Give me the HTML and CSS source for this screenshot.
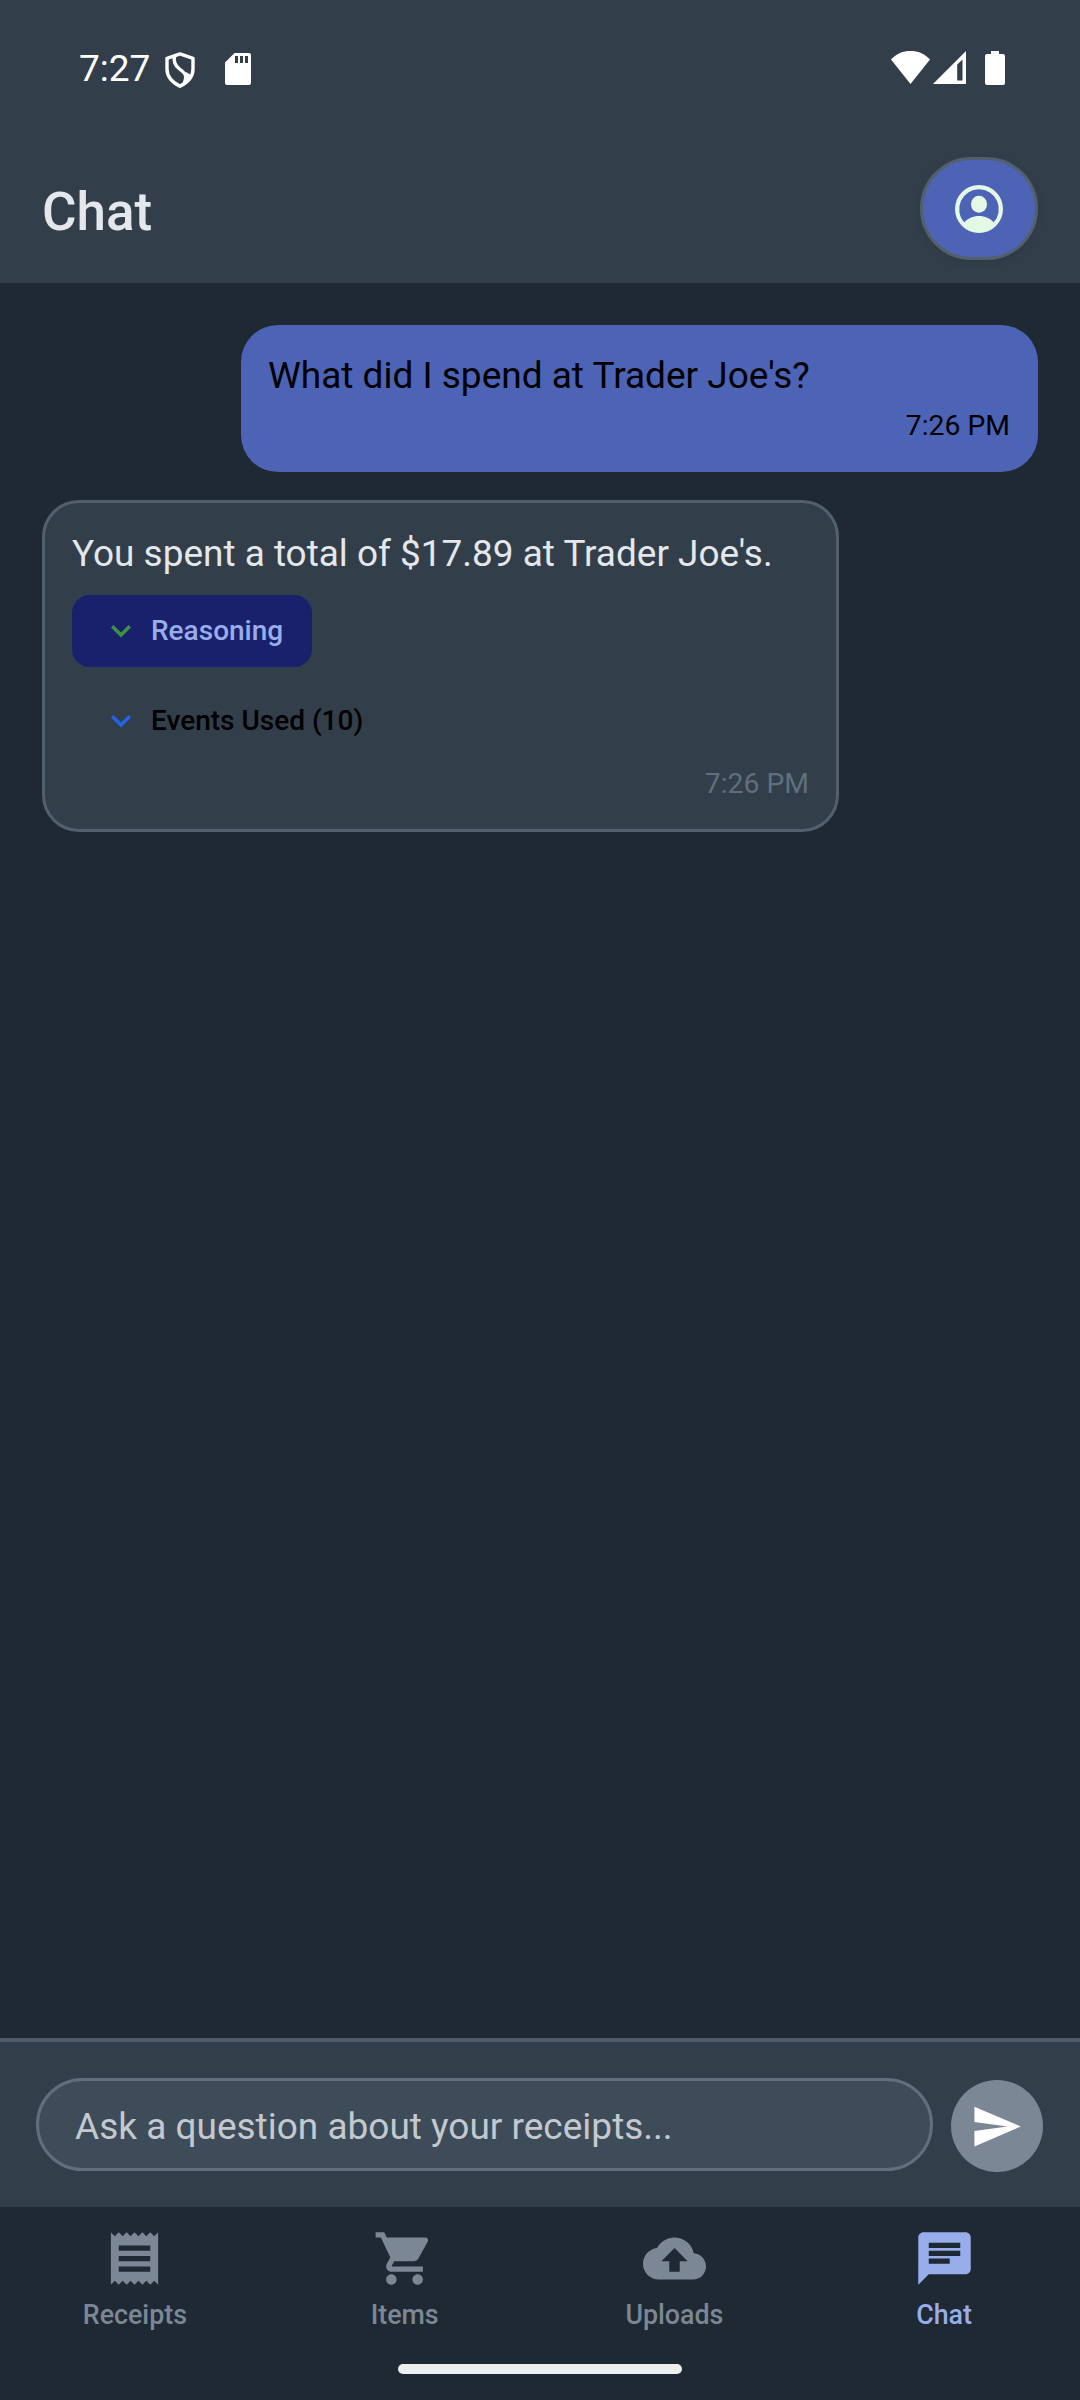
FILE: index.html
```html
<!DOCTYPE html>
<html lang="en">
<head>
<meta charset="utf-8">
<title>Chat</title>
<link rel="stylesheet" href="styles.css">
</head>
<body>
<div class="app">
  <div class="status">
    <span class="clock">7:27</span>
    <svg class="shield" viewBox="0 0 30 36" width="30" height="36"><g fill="none" stroke="#fff" stroke-width="3.4" stroke-linejoin="round"><path d="M15 1.9 28 6.3V17C28 24.500 22.500 30.500 15 34.200 7.500 30.500 2 24.500 2 17V6.300Z"/><path d="M9.800 3.500C8 9 10 13.500 14.500 17 20 21 22.500 23 19.300 31"/></g><path d="M21 20 26 23 19.500 32Z" fill="#fff"/></svg>
    <svg class="sd" viewBox="0 0 26 32" width="26" height="32"><path fill="#fff" fill-rule="evenodd" d="M9.500 0H24Q26 0 26 2V30Q26 32 24 32H2Q0 32 0 30V9.500ZM10 3V10H13V3ZM15 3V10H18V3ZM20 3V10H23V3Z"/></svg>
    <svg class="wifi" viewBox="0 0 39 33" width="39" height="33"><path fill="#fff" d="M19.500 33 0 8.500C5.500 2.500 12 0 19.500 0S33.500 2.500 39 8.500Z"/></svg>
    <svg class="signal" viewBox="0 0 33 33" width="33" height="33"><path fill="#fff" fill-rule="evenodd" d="M33 0V33H0ZM29.500 8.500 24.200 13.500V29.500H29.500Z"/></svg>
    <svg class="battery" viewBox="0 0 20 34" width="20" height="34"><path fill="#fff" d="M6 0H14V3H18Q20 3 20 5V32Q20 34 18 34H2Q0 34 0 32V5Q0 3 2 3H6Z"/></svg>
  </div>
  <header class="header">
    <h1 class="title">Chat</h1>
    <button class="profile" aria-label="Profile">
      <svg viewBox="0 0 48 48" width="48" height="48"><path fill="#e3f9e5" fill-rule="evenodd" d="M24 0A24 24 0 1 1 24 48 24 24 0 1 1 24 0ZM24 4.200A19.800 19.800 0 0 0 9.300 37.300C12.500 33.500 18 31 24 31S35.500 33.500 38.700 37.300A19.800 19.800 0 0 0 24 4.200Z"/><ellipse cx="24" cy="19.300" rx="8" ry="8.500" fill="#e3f9e5"/></svg>
    </button>
  </header>
  <main class="messages">
    <div class="bubble user">
      <p class="text">What did I spend at Trader Joe's?</p>
      <p class="time">7:26 PM</p>
    </div>
    <div class="bubble bot">
      <p class="text">You spent a total of $17.89 at Trader Joe's.</p>
      <div class="toggle reasoning">
        <svg viewBox="0 0 20 13" width="20" height="13"><path fill="none" stroke="#3f9142" stroke-width="3.500" d="M1.200 1.200 10 10 18.800 1.200"/></svg>
        <span>Reasoning</span>
      </div>
      <div class="toggle events">
        <svg viewBox="0 0 20 13" width="20" height="13"><path fill="none" stroke="#2563eb" stroke-width="3.500" d="M1.200 1.200 10 10 18.800 1.200"/></svg>
        <span>Events Used (10)</span>
      </div>
      <p class="time">7:26 PM</p>
    </div>
  </main>
  <div class="composer">
    <div class="field">Ask a question about your receipts...</div>
    <button class="send" aria-label="Send">
      <svg viewBox="0 0 24 24" width="53" height="53"><path fill="#fff" d="M2.010 21 23 12 2.010 3 2 10l15 2-15 2z"/></svg>
    </button>
  </div>
  <nav class="tabs">
    <div class="tab"><svg viewBox="0 0 24 24"><path d="M18 17H6v-2h12v2zm0-4H6v-2h12v2zm0-4H6V7h12v2zM3 22l1.500-1.500L6 22l1.500-1.500L9 22l1.500-1.500L12 22l1.500-1.500L15 22l1.500-1.500L18 22l1.500-1.500L21 22V2l-1.500 1.500L18 2l-1.500 1.500L15 2l-1.500 1.500L12 2l-1.500 1.500L9 2 7.500 3.500 6 2 4.500 3.500 3 2v20z"/></svg><span>Receipts</span></div>
    <div class="tab"><svg viewBox="0 0 24 24"><path d="M7 18c-1.100 0-1.990.9-1.990 2S5.900 22 7 22s2-.9 2-2-.9-2-2-2zM1 2v2h2l3.600 7.590-1.350 2.450c-.16.280-.25.610-.25.960 0 1.100.9 2 2 2h12v-2H7.420c-.14 0-.25-.11-.25-.25l.03-.12.9-1.630h7.450c.75 0 1.410-.41 1.750-1.030l3.580-6.490c.08-.14.12-.31.12-.48 0-.55-.45-1-1-1H5.210l-.94-2H1zm16 16c-1.100 0-1.990.9-1.990 2s.89 2 1.990 2 2-.9 2-2-.9-2-2-2z"/></svg><span>Items</span></div>
    <div class="tab"><svg viewBox="0 0 24 24"><path d="M19.350 10.040C18.670 6.590 15.640 4 12 4 9.110 4 6.600 5.640 5.350 8.040 2.340 8.360 0 10.910 0 14c0 3.310 2.690 6 6 6h13c2.760 0 5-2.240 5-5 0-2.640-2.050-4.780-4.650-4.960zM14 13v4h-4v-4H7l5-5 5 5h-3z"/></svg><span>Uploads</span></div>
    <div class="tab active"><svg viewBox="0 0 24 24"><path d="M20 2H4c-1.100 0-1.990.9-1.990 2L2 22l4-4h14c1.100 0 2-.9 2-2V4c0-1.100-.9-2-2-2zM6 9h12v2H6V9zm8 5H6v-2h8v2zm4-6H6V6h12v2z"/></svg><span>Chat</span></div>
  </nav>
  <div class="gesture"><div class="handle"></div></div>
</div>
</body>
</html>
```
FILE: styles.css
```css
* { box-sizing: border-box; }
body { margin: 0; background: #1f2933; font-family: Roboto, sans-serif; }
p, h1 { margin: 0; }
svg { display: block; flex: none; }
button { border: 0; padding: 0; }

.app { width: 1080px; height: 2400px; display: flex; flex-direction: column; }

.status {
  height: 136px; padding: 0 75px 0 79px; background: #323f4b; color: #fff;
  display: flex; align-items: flex-start;
}
.clock { width: 86px; padding-top: 47px; font-size: 37px; line-height: 43px; }
.shield { margin-top: 51.500px; }
.sd { margin: 53px auto 0 30px; }
.wifi { margin-top: 51px; }
.signal { margin: 51px 19px 0 3px; }
.battery { margin-top: 51px; }

.header {
  height: 147px; padding: 0 42px; background: #323f4b;
  display: flex; align-items: flex-start; justify-content: space-between;
}
.title { padding-top: 44px; font-size: 53px; line-height: 64px; font-weight: 500; color: #e4e7eb; }
.profile {
  width: 118px; height: 103px; margin-top: 21px; border: 3px solid #52606d; border-radius: 53px;
  background: #4c63b6; box-shadow: 0 3px 8px rgba(0, 0, 0, .08);
  display: flex; align-items: center; justify-content: center;
}

.messages { flex: 1; padding: 42px; display: flex; flex-direction: column; gap: 28px; }
.bubble { width: 797px; border-radius: 37px; display: flex; flex-direction: column; }
.user { height: 147px; align-self: flex-end; padding: 27px 28px 0 27px; background: #4c63b6; color: #000; }
.bot { height: 332px; padding: 27px 27px 0; background: #323f4b; border: 3px solid #52606d; color: #e4e7eb; }
.text { font-size: 37px; line-height: 48px; }
.bot .text { font-size: 36.950px; }
.time { align-self: flex-end; margin-top: 9px; font-size: 28.300px; line-height: 34px; }
.bot .time { margin-top: 10px; color: #616e7c; }
.toggle {
  height: 72px; padding: 0 28px 0 39px; border-radius: 18px; align-self: flex-start;
  display: flex; align-items: center; gap: 20px; font-size: 28px; line-height: 36px; font-weight: 500;
}
.reasoning { width: 240px; margin-top: 17px; background: #19216c; color: #98aeeb; }
.events { margin-top: 18px; color: #000; }

.composer {
  height: 169px; padding: 36px 37px 0 36px; background: #323f4b; border-top: 4px solid #4e5b68;
  display: flex; align-items: flex-start; gap: 18px;
}
.field {
  flex: 1; height: 93px; padding: 1px 36px 0; border: 3px solid #616e7c; border-radius: 47px;
  background: #3e4c59; color: #c3c9ce; font-size: 37px; line-height: 90px;
}
.send {
  width: 92px; height: 92px; margin-top: 2px; padding-right: 2px; border-radius: 50%; background: #7b8794;
  display: flex; align-items: center; justify-content: center;
}

.tabs { height: 141px; padding-right: 1px; display: grid; grid-template-columns: repeat(4, 1fr); }
.tab { display: flex; flex-direction: column; align-items: center; padding-top: 20px; color: #7b8794; }
.tab svg { width: 63px; height: 63px; fill: currentColor; }
.tab span { margin-top: 8px; font-size: 26.800px; line-height: 34px; font-weight: 500; }
.active { color: #98aeeb; }
.gesture { height: 52px; padding-top: 16px; }
.handle { width: 284px; height: 10px; margin: 0 auto; border-radius: 5px; background: #eceeef; }
```
